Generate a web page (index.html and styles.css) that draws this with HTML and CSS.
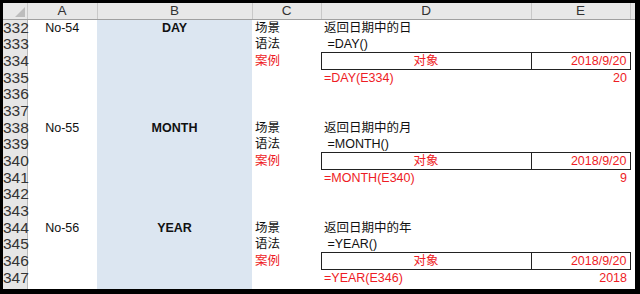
FILE: index.html
```html
<!DOCTYPE html>
<html lang="zh-CN">
<head>
    <meta charset="UTF-8">
    <title>日期函数</title>
    <link rel="stylesheet" href="styles.css">
</head>
<body>
    <div class="sheet">
        <table>
            <colgroup>
                <col class="w-num"><col class="w-a"><col class="w-b"><col class="w-c"><col class="w-d"><col class="w-e"><col class="w-f">
            </colgroup>
            <tr class="head">
                <th class="corner"><span class="tri"></span></th>
                <th>A</th><th>B</th><th>C</th><th>D</th><th>E</th><th></th>
            </tr>

            <!-- DAY -->
            <tr><td class="num">332</td><td class="ctr">No-54</td><td class="fn">DAY</td><td class="cn">场景</td><td class="cn">返回日期中的日</td><td></td><td></td></tr>
            <tr><td class="num">333</td><td></td><td class="fn"></td><td class="cn">语法</td><td class="pre"> =DAY()</td><td></td><td></td></tr>
            <tr><td class="num">334</td><td></td><td class="fn"></td><td class="cn red">案例</td><td class="box ctr cn red">对象</td><td class="box rt red">2018/9/20</td><td></td></tr>
            <tr><td class="num">335</td><td></td><td class="fn"></td><td></td><td class="red">=DAY(E334)</td><td class="rt red">20</td><td></td></tr>
            <tr><td class="num">336</td><td></td><td class="fn"></td><td></td><td></td><td></td><td></td></tr>
            <tr><td class="num">337</td><td></td><td class="fn"></td><td></td><td></td><td></td><td></td></tr>

            <!-- MONTH -->
            <tr><td class="num">338</td><td class="ctr">No-55</td><td class="fn">MONTH</td><td class="cn">场景</td><td class="cn">返回日期中的月</td><td></td><td></td></tr>
            <tr><td class="num">339</td><td></td><td class="fn"></td><td class="cn">语法</td><td class="pre"> =MONTH()</td><td></td><td></td></tr>
            <tr><td class="num">340</td><td></td><td class="fn"></td><td class="cn red">案例</td><td class="box ctr cn red">对象</td><td class="box rt red">2018/9/20</td><td></td></tr>
            <tr><td class="num">341</td><td></td><td class="fn"></td><td></td><td class="red">=MONTH(E340)</td><td class="rt red">9</td><td></td></tr>
            <tr><td class="num">342</td><td></td><td class="fn"></td><td></td><td></td><td></td><td></td></tr>
            <tr><td class="num">343</td><td></td><td class="fn"></td><td></td><td></td><td></td><td></td></tr>

            <!-- YEAR -->
            <tr><td class="num">344</td><td class="ctr">No-56</td><td class="fn">YEAR</td><td class="cn">场景</td><td class="cn">返回日期中的年</td><td></td><td></td></tr>
            <tr><td class="num">345</td><td></td><td class="fn"></td><td class="cn">语法</td><td class="pre"> =YEAR()</td><td></td><td></td></tr>
            <tr><td class="num">346</td><td></td><td class="fn"></td><td class="cn red">案例</td><td class="box ctr cn red">对象</td><td class="box rt red">2018/9/20</td><td></td></tr>
            <tr><td class="num">347</td><td></td><td class="fn"></td><td></td><td class="red">=YEAR(E346)</td><td class="rt red">2018</td><td></td></tr>
            <tr><td class="num">348</td><td></td><td class="fn"></td><td></td><td></td><td></td><td></td></tr>
        </table>
    </div>
</body>
</html>
```

FILE: styles.css
```css
body {
    margin: 0;
    width: 640px;
    height: 294px;
    overflow: hidden;
    background: #000;
}
.sheet {
    margin: 3px 5px 0 3px;
    width: 632px;
    height: 286px;
    overflow: hidden;
    background: #fff;
}
table {
    border-collapse: collapse;
    table-layout: fixed;
    width: 633px;
    font-family: "Liberation Sans", "Noto Sans CJK SC", sans-serif;
    font-size: 12.5px;
    color: #111;
}
.w-num { width: 24px; }
.w-a { width: 70px; }
.w-b { width: 155px; }
.w-c { width: 69px; }
.w-d { width: 210px; }
.w-e { width: 99px; }
.w-f { width: 6px; }

tr {
    height: 16.67px;
}
td, th {
    padding: 0 3px;
    line-height: 14px;
    white-space: nowrap;
    vertical-align: middle;
}

/* column letters */
.head {
    height: 16.5px;
}
.head th {
    background: #e8e8e8;
    color: #333;
    font-weight: normal;
    font-size: 13.5px;
    text-align: center;
    border-right: 1px solid #c9c9c9;
    border-bottom: 1px solid #a0a0a0;
}
.corner {
    position: relative;
}
.tri {
    position: absolute;
    right: 2px;
    bottom: 2px;
    width: 0;
    height: 0;
    border-left: 10px solid transparent;
    border-bottom: 10px solid #bdbdbd;
}

/* row numbers */
.num {
    background: #e6e6e6;
    color: #333;
    font-size: 15.5px;
    text-align: right;
    padding: 0;
    border-right: 1px solid #b8b8b8;
}

.ctr { text-align: center; }
.rt { text-align: right; }
.pre { white-space: pre; }
.cn { font-size: 12.5px; }
.red { color: #ee1c25; }

.fn {
    background: #dce6f1;
    text-align: center;
    font-weight: bold;
}
.box {
    border: 1px solid #222;
}
```
